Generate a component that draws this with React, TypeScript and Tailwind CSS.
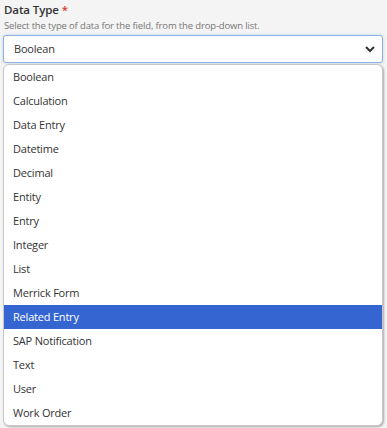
const options = [
    'Boolean',
    'Calculation',
    'Data Entry',
    'Datetime',
    'Decimal',
    'Entity',
    'Entry',
    'Integer',
    'List',
    'Merrick Form',
    'Related Entry',
    'SAP Notification',
    'Text',
    'User',
    'Work Order',
]

const App = () => {
    return (
        <div className="w-[387px] h-[428px] bg-[#f4f4f4] text-[#333] overflow-hidden" style={{ fontFamily: '"Open Sans", "Noto Sans", sans-serif' }}>
            <div className="px-[3px] pt-[2px]">
                <div className="pl-[1px] text-[11.5px] font-semibold text-[#333] leading-[16px] tracking-[-0.1px]">
                    Data Type <span className="text-[#d9342b]">*</span>
                </div>
                <div className="pl-[1px] mt-[1px] text-[9.5px] text-[#777] leading-[14px] tracking-[-0.15px]">
                    Select the type of data for the field, from the drop-down list.
                </div>
                <div className="mt-[2px] h-[28px] w-[380px] flex items-center justify-between bg-white border border-[#8db1e3] rounded-[3px] shadow-[0_0_3px_rgba(100,150,220,0.35)] pl-[10px] pr-[6px]">
                    <span className="text-[11px] tracking-[-0.2px] text-[#333]">Boolean</span>
                    <svg width="12" height="12" viewBox="0 0 12 12">
                        <path d="M2 4 L6 8 L10 4" fill="none" stroke="#333" strokeWidth="2" />
                    </svg>
                </div>
                <ul className="mt-[1px] w-[380px] bg-white border border-[#c8c8c8] rounded-[6px] shadow-[1px_1px_2px_rgba(0,0,0,0.3)] overflow-hidden">
                    {options.map((o) => (
                        <li
                            key={o}
                            className={
                                o === 'Related Entry'
                                    ? 'h-[24px] flex items-center pl-[9px] text-[11px] tracking-[-0.2px] bg-[#3565d0] text-white'
                                    : 'h-[24px] flex items-center pl-[9px] text-[11px] tracking-[-0.2px] text-[#333]'
                            }
                        >
                            {o}
                        </li>
                    ))}
                </ul>
            </div>
        </div>
    )
}
export default App
